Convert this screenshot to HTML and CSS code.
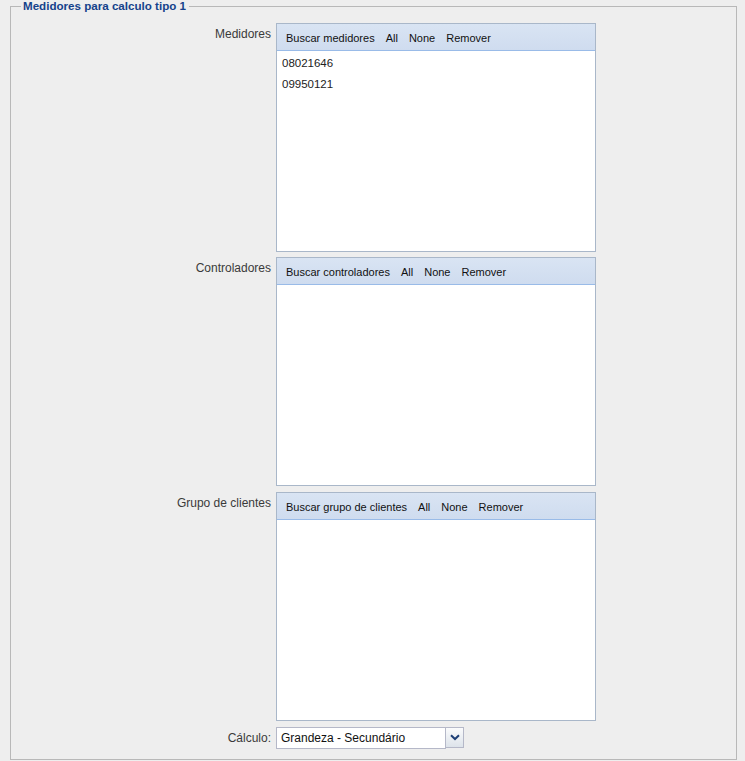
FILE: index.html
```html
<!DOCTYPE html>
<html lang="pt">
<head>
    <meta charset="UTF-8">
    <title>Medidores para calculo tipo 1</title>
    <link rel="stylesheet" href="styles.css">
</head>
<body>
    <fieldset class="group">
        <legend>Medidores para calculo tipo 1</legend>
        <div class="form">
            <label class="field-label">Medidores</label>
            <div class="list-box">
                <div class="toolbar">
                    <span class="tb-btn">Buscar medidores</span>
                    <span class="tb-btn">All</span>
                    <span class="tb-btn">None</span>
                    <span class="tb-btn">Remover</span>
                </div>
                <ul class="items">
                    <li>08021646</li>
                    <li>09950121</li>
                </ul>
            </div>

            <label class="field-label tight">Controladores</label>
            <div class="list-box tight">
                <div class="toolbar">
                    <span class="tb-btn">Buscar controladores</span>
                    <span class="tb-btn">All</span>
                    <span class="tb-btn">None</span>
                    <span class="tb-btn">Remover</span>
                </div>
                <ul class="items"></ul>
            </div>

            <label class="field-label">Grupo de clientes</label>
            <div class="list-box">
                <div class="toolbar">
                    <span class="tb-btn">Buscar grupo de clientes</span>
                    <span class="tb-btn">All</span>
                    <span class="tb-btn">None</span>
                    <span class="tb-btn">Remover</span>
                </div>
                <ul class="items"></ul>
            </div>

            <label class="field-label">Cálculo:</label>
            <div class="combo">
                <div class="combo-input">Grandeza - Secundário</div>
                <div class="combo-trigger">
                    <svg width="10" height="7" viewBox="0 0 10 7"><path d="M1 1.2 L5 5 L9 1.2" fill="none" stroke="#1d3f76" stroke-width="2"/></svg>
                </div>
            </div>
        </div>
    </fieldset>
</body>
</html>
```

FILE: styles.css
```css
body {
    margin: 0;
    background: #eeeeee;
    font-family: "Liberation Sans", Arial, sans-serif;
    color: #222;
}
.group {
    box-sizing: border-box;
    width: 727px;
    height: 760px;
    margin: 0 0 0 10px;
    padding: 0 10px 9px 10px;
    border: 1px solid #b8b8b8;
    background: #eeeeee;
}
.group legend {
    padding: 0 3px 0 2px;
    font-size: 11.6px;
    line-height: 12px;
    font-weight: bold;
    color: #15428b;
}
.form {
    display: grid;
    grid-template-columns: 250px 320px;
    column-gap: 5px;
    row-gap: 6px;
    margin-top: 11px;
}
.field-label {
    text-align: right;
    font-size: 12px;
    color: #3a3a3a;
    padding-top: 4px;
}
.list-box {
    box-sizing: border-box;
    height: 229px;
    border: 1px solid #a9b7c9;
    background: #fff;
}
.tight {
    margin-top: -1px;
}
.toolbar {
    height: 27px;
    box-sizing: border-box;
    border-bottom: 1px solid #99bbe8;
    background: linear-gradient(#d9e4f3, #cfdcef);
    display: flex;
    align-items: center;
    padding: 1px 0 0 4px;
}
.tb-btn {
    font-size: 11px;
    color: #111;
    padding: 0 5px 0 5px;
    margin-right: 1px;
}
.items {
    list-style: none;
    margin: 0;
    padding: 2px 0 0 0;
}
.items li {
    font-size: 11.5px;
    line-height: 21px;
    padding-left: 5px;
    color: #222;
}
.combo {
    display: flex;
    height: 22px;
}
.combo-input {
    box-sizing: border-box;
    width: 170px;
    height: 22px;
    border: 1px solid #b5b8c8;
    background: #fff;
    font-size: 12px;
    line-height: 20px;
    padding-left: 4px;
    color: #111;
}
.combo-trigger {
    box-sizing: border-box;
    width: 18px;
    height: 21px;
    border: 1px solid #b5b8c8;
    border-left: none;
    background: linear-gradient(#fafbfc, #dde3ea);
    display: flex;
    align-items: center;
    justify-content: center;
}
```
